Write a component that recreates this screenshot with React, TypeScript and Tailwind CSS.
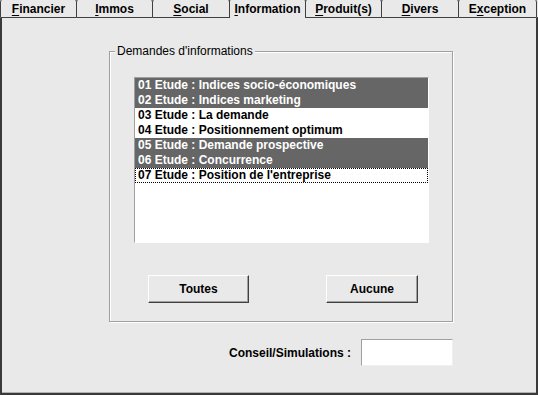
const tabs = [
  { pre: "", key: "F", post: "inancier", w: "w-[77px]" },
  { pre: "", key: "I", post: "mmos", w: "w-[77px]" },
  { pre: "", key: "S", post: "ocial", w: "w-[78px]" },
  { pre: "", key: "I", post: "nformation", w: "w-[77px]", active: true },
  { pre: "", key: "P", post: "roduit(s)", w: "w-[77px]" },
  { pre: "", key: "D", post: "ivers", w: "w-[78px]" },
  { pre: "E", key: "x", post: "ception", w: "w-[79px]" },
];

const rows = [
  { text: "01 Etude : Indices socio-économiques", sel: true },
  { text: "02 Etude : Indices marketing", sel: true },
  { text: "03 Etude : La demande", sel: false },
  { text: "04 Etude : Positionnement optimum", sel: false },
  { text: "05 Etude : Demande prospective", sel: true },
  { text: "06 Etude : Concurrence", sel: true },
  { text: "07 Etude : Position de l'entreprise", sel: false, focus: true },
];

function Button({ label, w }: { label: string; w: string }) {
  return (
    <button
      className={`${w} h-[28px] bg-[#e9e9e9] border border-t-white border-l-white border-b-[#404040] border-r-[#404040] shadow-[inset_-1px_-1px_0_#a0a0a0] text-[12px] font-bold text-black`}
    >
      {label}
    </button>
  );
}

export default function App() {
  return (
    <div className="w-[538px] h-[395px] flex flex-col bg-[#e9e9e9] font-['Liberation_Sans',Arial,sans-serif] text-[12px] text-black overflow-hidden">
      {/* tab strip */}
      <div className="flex h-[20px] -mt-[2px] shrink-0">
        {tabs.map((t, i) => (
          <div
            key={i}
            className={`${t.w} -ml-px first:ml-0 h-[20px] flex items-center justify-center pt-[2px] font-bold leading-[17px] rounded-t-[4px] border-x border-t border-[#404040] bg-[#e9e9e9] ${
              t.active ? "border-b-0" : "border-b border-b-[#404040]"
            }`}
          >
            <span>
              {t.pre}
              <span className="underline underline-offset-[2px]">{t.key}</span>
              {t.post}
            </span>
          </div>
        ))}
        <div className="flex-1 border-b border-[#404040]" />
      </div>

      {/* panel */}
      <div className="flex-1 flex flex-col border-l-2 border-r-2 border-b-2 border-[#3a3a3a] shadow-[inset_0_-1px_0_#b0b0b0]">
        <div className="ml-[107px] w-[344px] flex flex-col">
          <fieldset className="mt-[26px] w-[344px] border border-[#a0a0a0] shadow-[inset_1px_1px_0_#fff,1px_1px_0_#fff] pb-[18px]">
            <legend className="ml-[5px] px-[2px] leading-[14px] bg-[#e9e9e9]">
              Demandes d'informations
            </legend>
            <div className="ml-[24px] mt-[19px] w-[295px] h-[166px] bg-white border border-t-[#a0a0a0] border-l-[#a0a0a0] border-b-white border-r-white">
              {rows.map((r, i) => (
                <div
                  key={i}
                  className={`h-[15px] leading-[15px] pl-[3px] font-bold whitespace-nowrap ${
                    r.sel ? "bg-[#666666] text-white" : "text-black"
                  } ${r.focus ? "outline-1 outline-dotted outline-black -outline-offset-1" : ""}`}
                >
                  {r.text}
                </div>
              ))}
            </div>
            <div className="flex mt-[32px] ml-[38px] gap-[77px]">
              <Button label="Toutes" w="w-[101px]" />
              <Button label="Aucune" w="w-[92px]" />
            </div>
          </fieldset>

          <div className="mt-[17px] flex items-center justify-end gap-[10px]">
            <span className="font-bold">Conseil/Simulations :</span>
            <div className="w-[92px] h-[27px] bg-white border border-t-[#a0a0a0] border-l-[#a0a0a0] border-b-[#f0f0f0] border-r-[#f0f0f0]" />
          </div>
        </div>
      </div>
    </div>
  );
}
